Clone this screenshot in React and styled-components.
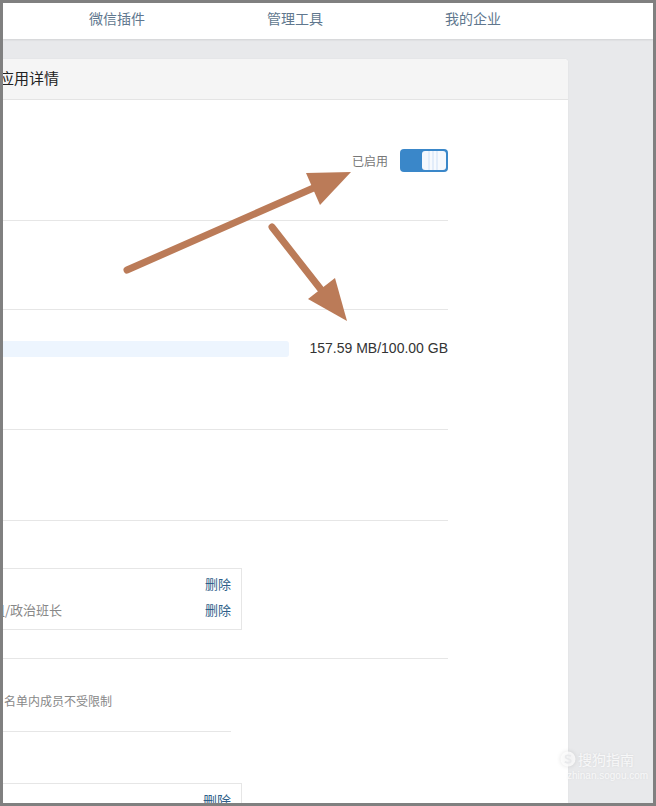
import styled, { createGlobalStyle } from 'styled-components';

const GlobalStyle = createGlobalStyle`
  html, body {
    margin: 0;
    padding: 0;
    background: #fff;
    font-family: 'Noto Sans CJK SC', 'Liberation Sans', sans-serif;
  }
`;

const Frame = styled.div`
  position: relative;
  box-sizing: border-box;
  width: 656px;
  height: 806px;
  border: 3px solid #808080;
  overflow: hidden;
  display: flex;
  flex-direction: column;
  background: #e8e9eb;
`;

const Nav = styled.nav`
  flex: none;
  height: 36px;
  padding-left: 25px;
  display: flex;
  background: #fff;
  box-shadow: 0 1px 2px rgba(0, 0, 0, 0.1);
`;

const NavItem = styled.a`
  width: 178px;
  line-height: 30px;
  text-align: center;
  font-size: 14px;
  color: #60778e;
`;

const Main = styled.main`
  flex: 1;
  min-height: 0;
  padding-top: 20px;
`;

const Card = styled.section`
  width: 585px;
  height: 100%;
  margin-left: -20px;
  background: #fff;
  border-radius: 4px 4px 0 0;
  box-shadow: 0 0 2px rgba(0, 0, 0, 0.06);
`;

const CardHeader = styled.h2`
  box-sizing: border-box;
  height: 41px;
  margin: 0;
  padding-left: 16px;
  background: #f5f5f5;
  border-bottom: 1px solid #e4e4e4;
  border-radius: 4px 4px 0 0;
  font-size: 15px;
  font-weight: 400;
  line-height: 38px;
  color: #222;
`;

const Section = styled.div`
  box-sizing: border-box;
  height: ${({ $height }) => $height}px;
  margin-right: 120px;
  padding-top: ${({ $top }) => $top || 0}px;
  border-bottom: 1px solid ${({ $last }) => ($last ? 'transparent' : '#e6e6e6')};
`;

const SwitchRow = styled.div`
  display: flex;
  justify-content: flex-end;
  align-items: center;
  gap: 12px;
`;

const StatusText = styled.span`
  font-size: 12px;
  color: #777;
`;

const Switch = styled.div`
  box-sizing: border-box;
  width: 48px;
  height: 23px;
  padding: 2px;
  display: flex;
  justify-content: flex-end;
  background: #3a87c9;
  border-radius: 4px;
`;

const SwitchHandle = styled.div`
  width: 24px;
  height: 19px;
  border-radius: 3px;
  background:
    repeating-linear-gradient(90deg, #e3edfa 0 2px, #f7fafe 2px 4px) center / 12px 100% no-repeat,
    #f5f8fd;
`;

const StorageRow = styled.div`
  display: flex;
  align-items: center;
  gap: 20px;
`;

const StorageBar = styled.div`
  flex: 1;
  height: 16px;
  background: #edf5fe;
  border-radius: 3px;
`;

const StorageText = styled.span`
  margin-top: -2px;
  font-family: 'Liberation Sans', Arial, sans-serif;
  font-size: 14px;
  color: #333;
`;

const ListBox = styled.div`
  box-sizing: border-box;
  margin-right: 206px;
  padding: ${({ $large }) => ($large ? 3 : 1)}px 10px 7px 8px;
  border: 1px solid #e6e6e6;
`;

const ListRow = styled.div`
  height: 26px;
  display: flex;
  justify-content: space-between;
  align-items: center;
  font-size: 13px;
`;

const ListLabel = styled.span`
  color: #888;
`;

const DeleteLink = styled.a`
  font-size: ${({ $large }) => ($large ? 14 : 13)}px;
  color: #2f5f8a;
`;

const Note = styled.p`
  margin: 0 0 0 21px;
  font-size: 12px;
  line-height: 18px;
  color: #888;
`;

const InnerDivider = styled.div`
  height: 1px;
  margin: 21px 217px 51px 0;
  background: #e6e6e6;
`;

const Arrows = styled.svg`
  position: absolute;
  left: -3px;
  top: -3px;
  pointer-events: none;
`;

const Watermark = styled.div`
  position: absolute;
  left: 557px;
  top: 747px;
  width: 90px;
  color: rgba(255, 255, 255, 0.75);
  text-shadow: 0 0 3px rgba(0, 0, 0, 0.08);
`;

const WatermarkBrand = styled.div`
  display: flex;
  align-items: center;
  gap: 2px;
  font-size: 14px;
  line-height: 18px;

  svg {
    filter: drop-shadow(0 0 2px rgba(0, 0, 0, 0.15));
  }
`;

const WatermarkUrl = styled.div`
  margin-top: 3px;
  padding-left: 7px;
  font-family: 'Liberation Sans', Arial, sans-serif;
  font-size: 10px;
  line-height: 10px;
  white-space: nowrap;
`;

const navItems = ['微信插件', '管理工具', '我的企业'];

const App = () => (
  <>
    <GlobalStyle />
    <Frame>
      <Nav>
        {navItems.map((item) => (
          <NavItem key={item}>{item}</NavItem>
        ))}
      </Nav>
      <Main>
        <Card>
          <CardHeader>应用详情</CardHeader>
          <Section $height={121} $top={49}>
            <SwitchRow>
              <StatusText>已启用</StatusText>
              <Switch>
                <SwitchHandle />
              </Switch>
            </SwitchRow>
          </Section>
          <Section $height={89} />
          <Section $height={120} $top={31}>
            <StorageRow>
              <StorageBar />
              <StorageText>157.59 MB/100.00 GB</StorageText>
            </StorageRow>
          </Section>
          <Section $height={91} />
          <Section $height={138} $top={47}>
            <ListBox>
              <ListRow>
                <ListLabel />
                <DeleteLink>删除</DeleteLink>
              </ListRow>
              <ListRow>
                <ListLabel>组/政治班长</ListLabel>
                <DeleteLink>删除</DeleteLink>
              </ListRow>
            </ListBox>
          </Section>
          <Section $height={200} $top={33} $last>
            <Note>名单内成员不受限制</Note>
            <InnerDivider />
            <ListBox $large>
              <ListRow>
                <ListLabel />
                <DeleteLink $large>删除</DeleteLink>
              </ListRow>
            </ListBox>
          </Section>
        </Card>
      </Main>

      <Arrows width="656" height="806" viewBox="0 0 656 806">
        <g fill="#bb7b58" stroke="#bb7b58" strokeLinecap="round">
          <path d="M127 270 L318 186" strokeWidth="7" fill="none" />
          <path d="M272 227 L326 296" strokeWidth="7" fill="none" />
          <polygon points="351,172 306,173 320,205" stroke="none" />
          <polygon points="347,321 308,299 335,278" stroke="none" />
        </g>
      </Arrows>

      <Watermark>
        <WatermarkBrand>
          <svg width="16" height="16" viewBox="0 0 16 16">
            <circle cx="8" cy="8" r="7.5" fill="rgba(255,255,255,0.75)" />
            <path d="M11 5.2 C9 3.8 5.5 4.2 5.5 6 C5.5 8 10.8 7.6 10.8 10 C10.8 12 7 12.3 4.8 10.8" fill="none" stroke="#e8e9eb" strokeWidth="1.8" />
          </svg>
          <span>搜狗指南</span>
        </WatermarkBrand>
        <WatermarkUrl>zhinan.sogou.com</WatermarkUrl>
      </Watermark>
    </Frame>
  </>
);

export default App;
